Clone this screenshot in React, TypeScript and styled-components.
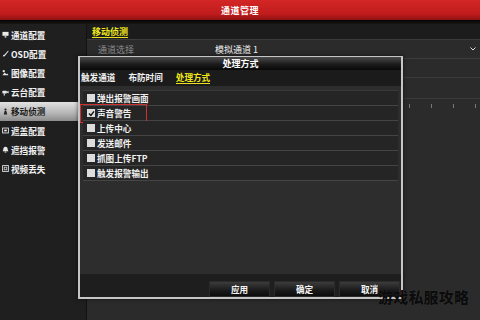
import React from 'react';
import styled, { createGlobalStyle } from 'styled-components';

const GlobalStyle = createGlobalStyle`
  html, body {
    margin: 0;
    padding: 0;
    background: #2b2b2b;
  }
  * {
    box-sizing: border-box;
  }
`;

const Screen = styled.div`
  position: relative;
  width: 480px;
  height: 320px;
  overflow: hidden;
  display: flex;
  flex-direction: column;
  background: #2b2b2b;
  font-family: 'Noto Sans CJK SC', 'Liberation Sans', sans-serif;
  color: #f0f0f0;
`;

const Header = styled.div`
  height: 24px;
  flex-shrink: 0;
  display: flex;
  flex-direction: column;
`;

const HeaderRed = styled.div`
  height: 20px;
  display: flex;
  align-items: center;
  justify-content: center;
  background: linear-gradient(#d42626, #c01c1c 70%, #8e1212);
  font-size: 9px;
  font-weight: 700;
  color: #fff;
  letter-spacing: 0.5px;
`;

const HeaderStrip = styled.div`
  flex: 1;
  background: linear-gradient(#050505, #161616);
`;

const Body = styled.div`
  flex: 1;
  display: flex;
`;

const Sidebar = styled.div`
  width: 87px;
  flex-shrink: 0;
  background: #1f1f1f;
  border-right: 1px solid #121212;
  padding-top: 1px;
  display: flex;
  flex-direction: column;
`;

const NavItem = styled.div<{ $active?: boolean }>`
  height: 19.2px;
  display: flex;
  align-items: center;
  gap: 2px;
  padding-left: 2px;
  font-size: 8.6px;
  font-weight: 700;
  color: ${(p) => (p.$active ? '#1a1a1a' : '#f2f2f2')};
  background: ${(p) =>
    p.$active ? 'linear-gradient(#e2e2e2, #b4b4b4 60%, #8c8c8c)' : 'transparent'};
`;

const NavIcon = styled.svg`
  width: 7px;
  height: 7px;
  flex-shrink: 0;
`;

const Main = styled.div`
  flex: 1;
  display: flex;
  flex-direction: column;
  background: #2b2b2b;
`;

const MainTabBar = styled.div`
  height: 16px;
  display: flex;
  align-items: center;
  padding-left: 5px;
  background: #1c1c1c;
  border-bottom: 1px solid #3c3c3c;
`;

const MainTab = styled.span`
  font-size: 9px;
  font-weight: 700;
  color: #f0e81a;
  border-bottom: 1px solid #e8e020;
  line-height: 11px;
`;

const FieldRow = styled.div`
  height: 19px;
  display: flex;
  align-items: center;
  padding: 0 4px 0 11px;
  border-bottom: 1px solid #3d3d3d;
  font-size: 9px;
`;

const FieldLabel = styled.span`
  width: 117px;
  color: #8a8a8a;
`;

const FieldValue = styled.span`
  flex: 1;
  color: #f2f2f2;
`;

const PlainRow = styled.div<{ $h: number }>`
  height: ${(p) => p.$h}px;
  border-bottom: 1px solid #3a3a3a;
`;

const TickRow = styled.div`
  height: 14px;
  display: flex;
  align-items: flex-start;
  justify-content: flex-end;
  gap: 21px;
  padding: 5px 4px 0 0;
`;

const Tick = styled.span`
  width: 1px;
  height: 4px;
  background: #777;
`;

const Dialog = styled.div`
  position: absolute;
  left: 78px;
  top: 56px;
  width: 325px;
  height: 243px;
  border: 2px solid #c6c6c6;
  border-top-width: 1px;
  display: flex;
  flex-direction: column;
  background: #2d2d2d;
  box-shadow: 0 0 4px rgba(0, 0, 0, 0.6);
`;

const DialogTitle = styled.div`
  height: 13px;
  display: flex;
  align-items: center;
  justify-content: center;
  background: linear-gradient(#4a4a4a, #1c1c1c 55%, #080808);
  font-size: 9px;
  font-weight: 700;
  color: #fff;
`;

const DialogTabs = styled.div`
  height: 16px;
  display: flex;
  align-items: center;
  gap: 13px;
  padding-left: 1px;
  background: #1b1b1b;
`;

const DialogTab = styled.span<{ $active?: boolean }>`
  font-size: 8.6px;
  font-weight: 700;
  line-height: 11px;
  color: ${(p) => (p.$active ? '#f0e81a' : '#f2f2f2')};
  border-bottom: 1px solid ${(p) => (p.$active ? '#e8e020' : 'transparent')};
`;

const DialogContent = styled.div`
  flex: 1;
  padding: 4px 3px 0 3px;
`;

const OptionList = styled.div`
  border-top: 1px solid #3a3a3a;
  display: flex;
  flex-direction: column;
`;

const OptionRow = styled.div`
  position: relative;
  height: 15px;
  display: flex;
  align-items: center;
  gap: 2px;
  padding-left: 4px;
  background: #252525;
  border-bottom: 1px solid #454545;
  font-size: 8.6px;
  font-weight: 700;
  color: #f0f0f0;
`;

const CheckBox = styled.span`
  width: 8px;
  height: 8px;
  flex-shrink: 0;
  background: #dcdcdc;
  display: flex;
  align-items: center;
  justify-content: center;
`;

const RedMark = styled.span`
  position: absolute;
  left: -3px;
  top: -2px;
  width: 67px;
  height: 19px;
  border: 1.5px solid #d03030;
`;

const DialogFooter = styled.div`
  height: 23px;
  display: flex;
  align-items: flex-end;
  justify-content: flex-end;
  gap: 4px;
  padding-right: 1px;
  background: #1e1e1e;
`;

const FooterButton = styled.div`
  width: 61px;
  height: 16px;
  display: flex;
  align-items: center;
  justify-content: center;
  background: linear-gradient(#3c3c3c, #1a1a1a 60%, #0c0c0c);
  border: 1px solid #2a2a2a;
  font-size: 8.6px;
  font-weight: 700;
  color: #f4f4f4;
`;

const Watermark = styled.div`
  position: absolute;
  left: 378px;
  top: 289px;
  font-size: 15px;
  line-height: 16px;
  font-weight: 900;
  letter-spacing: 0.2px;
  color: #0c0c0c;
  text-shadow: 0 0 1px rgba(255, 255, 255, 0.15);
`;

const navItems = [
  { label: '通道配置', icon: 'monitor' },
  { label: 'OSD配置', icon: 'brush' },
  { label: '图像配置', icon: 'image' },
  { label: '云台配置', icon: 'ptz' },
  { label: '移动侦测', icon: 'person', active: true },
  { label: '遮盖配置', icon: 'mask' },
  { label: '遮挡报警', icon: 'alarm' },
  { label: '视频丢失', icon: 'video' },
];

const options = ['弹出报警画面', '声音警告', '上传中心', '发送邮件', '抓图上传FTP', '触发报警输出'];

const Icon = ({ kind, dark }: { kind: string; dark?: boolean }) => {
  const c = dark ? '#222' : '#e8e8e8';
  switch (kind) {
    case 'monitor':
      return (
        <NavIcon viewBox="0 0 8 8">
          <rect x="0.5" y="1" width="7" height="4.5" fill={c} />
          <rect x="3" y="6" width="2" height="1.5" fill={c} />
        </NavIcon>
      );
    case 'brush':
      return (
        <NavIcon viewBox="0 0 8 8">
          <path d="M7 0.5 L3 5 L4 6 L7.5 1.5 Z" fill={c} />
          <path d="M1 7.5 Q1 5 3 5 L4 6 Q3.5 7.5 1 7.5 Z" fill={c} />
        </NavIcon>
      );
    case 'image':
      return (
        <NavIcon viewBox="0 0 8 8">
          <circle cx="2" cy="2.5" r="1.3" fill={c} />
          <path d="M0.5 7 L3 4 L5 6 L6 5 L7.5 7 Z" fill={c} />
        </NavIcon>
      );
    case 'ptz':
      return (
        <NavIcon viewBox="0 0 8 8">
          <rect x="0.5" y="2" width="5" height="3" rx="0.5" fill={c} />
          <path d="M5.5 3 L7.5 2 L7.5 5 L5.5 4 Z" fill={c} />
          <rect x="2" y="5" width="1.2" height="2.5" fill={c} />
        </NavIcon>
      );
    case 'person':
      return (
        <NavIcon viewBox="0 0 8 8">
          <circle cx="4" cy="1.8" r="1.3" fill={c} />
          <path d="M2 7.5 L3 3.5 L5 3.5 L6 7.5 Z" fill={c} />
        </NavIcon>
      );
    case 'mask':
      return (
        <NavIcon viewBox="0 0 8 8">
          <rect x="0.7" y="1.2" width="6.6" height="5.6" fill="none" stroke={c} strokeWidth="1" />
          <rect x="2.5" y="3" width="3" height="2" fill={c} />
        </NavIcon>
      );
    case 'alarm':
      return (
        <NavIcon viewBox="0 0 8 8">
          <path d="M4 0.8 Q6.5 0.8 6.5 4 L7.3 6 L0.7 6 L1.5 4 Q1.5 0.8 4 0.8 Z" fill={c} />
          <rect x="3" y="6.3" width="2" height="1.2" fill={c} />
        </NavIcon>
      );
    default:
      return (
        <NavIcon viewBox="0 0 8 8">
          <rect x="0.7" y="0.7" width="6.6" height="6.6" fill="none" stroke={c} strokeWidth="1" />
          <rect x="2.5" y="2.5" width="3" height="3" fill="none" stroke={c} strokeWidth="0.8" />
        </NavIcon>
      );
  }
};

const App: React.FC = () => {
  return (
    <>
      <GlobalStyle />
      <Screen>
        <Header>
          <HeaderRed>通道管理</HeaderRed>
          <HeaderStrip />
        </Header>
        <Body>
          <Sidebar>
            {navItems.map((item) => (
              <NavItem key={item.label} $active={item.active}>
                <Icon kind={item.icon} dark={item.active} />
                {item.label}
              </NavItem>
            ))}
          </Sidebar>
          <Main>
            <MainTabBar>
              <MainTab>移动侦测</MainTab>
            </MainTabBar>
            <FieldRow>
              <FieldLabel>通道选择</FieldLabel>
              <FieldValue>模拟通道 1</FieldValue>
              <svg width="6" height="4" viewBox="0 0 6 4">
                <path d="M0.5 0.5 L3 3 L5.5 0.5" fill="none" stroke="#ddd" strokeWidth="1" />
              </svg>
            </FieldRow>
            <PlainRow $h={19} />
            <PlainRow $h={21} />
            <TickRow>
              <Tick />
              <Tick />
              <Tick />
              <Tick />
            </TickRow>
          </Main>
        </Body>

        <Dialog>
          <DialogTitle>处理方式</DialogTitle>
          <DialogTabs>
            <DialogTab>触发通道</DialogTab>
            <DialogTab>布防时间</DialogTab>
            <DialogTab $active>处理方式</DialogTab>
          </DialogTabs>
          <DialogContent>
            <OptionList>
              {options.map((opt, i) => (
                <OptionRow key={opt}>
                  <CheckBox>
                    {i === 1 && (
                      <svg width="7" height="7" viewBox="0 0 7 7">
                        <path d="M1 3.6 L2.9 5.5 L6 1.4" fill="none" stroke="#111" strokeWidth="1.4" />
                      </svg>
                    )}
                  </CheckBox>
                  {opt}
                  {i === 1 && <RedMark />}
                </OptionRow>
              ))}
            </OptionList>
          </DialogContent>
          <DialogFooter>
            <FooterButton>应用</FooterButton>
            <FooterButton>确定</FooterButton>
            <FooterButton>取消</FooterButton>
          </DialogFooter>
        </Dialog>

        <Watermark>游戏私服攻略</Watermark>
      </Screen>
    </>
  );
};

export default App;
